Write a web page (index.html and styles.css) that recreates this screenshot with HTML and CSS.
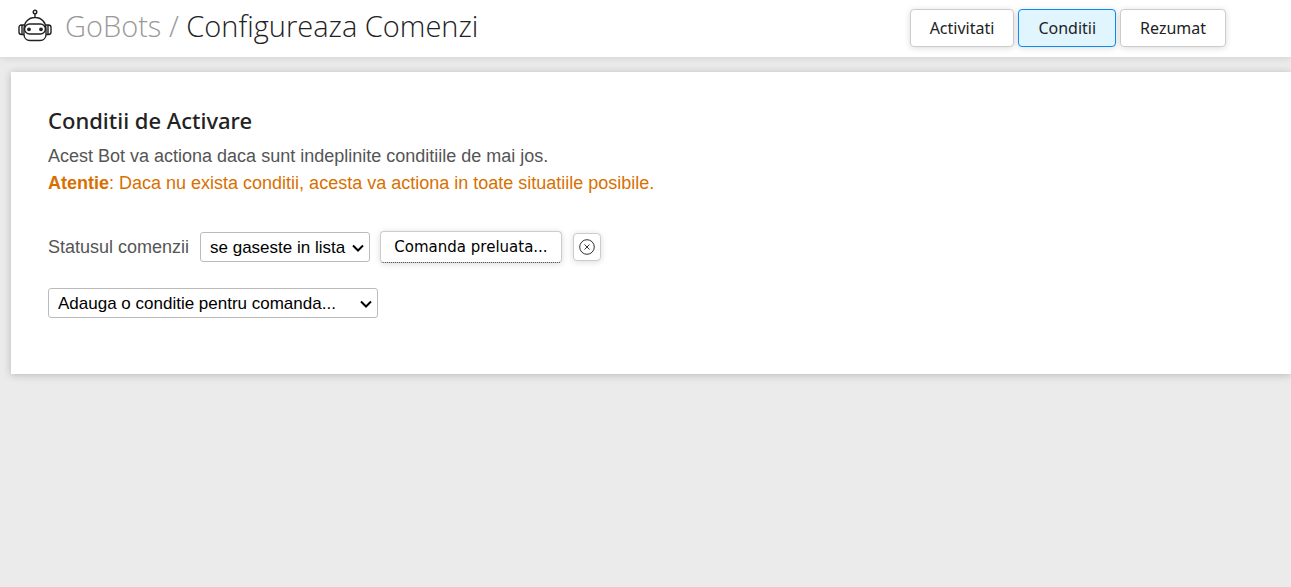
FILE: index.html
```html
<!DOCTYPE html>
<html lang="ro">
<head>
    <meta charset="UTF-8">
    <meta name="viewport" content="width=device-width, initial-scale=1.0">
    <title>GoBots / Configureaza Comenzi</title>
    <link rel="stylesheet" href="styles.css">
</head>
<body>
    <header class="topbar">
        <svg class="logo" viewBox="0 0 34 34" fill="none" stroke="#222" stroke-width="1.4">
            <circle cx="17" cy="3" r="1.8"/>
            <path d="M17 4.8V8M6 25.5V20C6 13.300 10.500 8.500 17 8.500S28 13.300 28 20V25.500C28 29 25.500 31.500 22 31.500H12C8.500 31.500 6 29 6 25.500Z"/>
            <path d="M6 16H3.500Q1 16 1 18.500V23Q1 25.500 3.500 25.500H6M28 16H30.500Q33 16 33 18.500V23Q33 25.500 30.500 25.500H28M4 16V25.500M30 16V25.500"/>
            <rect x="6.600" y="15" width="20.800" height="10" rx="5"/>
            <circle cx="11" cy="20.300" r="1.200" fill="#222"/>
            <circle cx="23" cy="20.300" r="1.200" fill="#222"/>
        </svg>
        <h1><a href="#">GoBots</a> <span>/</span> Configureaza Comenzi</h1>
        <nav class="tabs">
            <button type="button">Activitati</button>
            <button type="button" class="active">Conditii</button>
            <button type="button">Rezumat</button>
        </nav>
    </header>

    <main class="panel">
        <h2>Conditii de Activare</h2>
        <p>Acest Bot va actiona daca sunt indeplinite conditiile de mai jos.</p>
        <p class="warning"><strong>Atentie</strong>: Daca nu exista conditii, acesta va actiona in toate situatiile posibile.</p>

        <div class="condition">
            <label for="operator">Statusul comenzii</label>
            <div class="select">
                <select id="operator">
                    <option>se gaseste in lista</option>
                    <option>nu se gaseste in lista</option>
                </select>
                <svg viewBox="0 0 12 8"><path d="M1 1.500L6 6.500L11 1.500"/></svg>
            </div>
            <button type="button" class="values">Comanda preluata...</button>
            <button type="button" class="remove" aria-label="Sterge conditia">
                <svg viewBox="0 0 16 16"><circle cx="8" cy="8" r="7.300"/><path d="M5.500 5.500L10.500 10.500M10.500 5.500L5.500 10.500"/></svg>
            </button>
        </div>

        <div class="select select-wide">
            <select aria-label="Adauga o conditie">
                <option>Adauga o conditie pentru comanda...</option>
            </select>
            <svg viewBox="0 0 12 8"><path d="M1 1.500L6 6.500L11 1.500"/></svg>
        </div>
    </main>
</body>
</html>
```
FILE: styles.css
```css
* { box-sizing: border-box; }
body { margin: 0; min-height: 100vh; background: #ebebeb; color: #555; font-family: "Liberation Sans", Arial, sans-serif; font-size: 18px; line-height: 27px; }

.topbar { display: flex; align-items: center; height: 57px; padding: 0 65px 2px 18px; background: white; box-shadow: 0 0 8px rgba(0,0,0,0.15); }
.logo { width: 34px; height: 34px; margin: 0 13px 4px 0; }
h1 { margin: 0 0 3px; color: #222; font-family: "Open Sans", sans-serif; font-size: 29px; font-weight: 300; line-height: 40px; }
h1 a, h1 span { color: #999; text-decoration: none; }
.tabs { display: flex; gap: 4px; margin-left: auto; }
button { border: 1px solid #ccc; border-radius: 4px; background: white; box-shadow: 0 1px 6px rgba(0,0,0,0.15); cursor: pointer; }
.tabs button { height: 38px; padding: 0 19px; color: #222; font-family: "Noto Sans", sans-serif; font-size: 16px; }
.tabs .active { border-color: #0d8bf2; background: #e1f5fe; }

.panel { margin: 15px 0 0 11px; padding: 34px 37px 56px; background: white; box-shadow: 0 1px 8px rgba(0,0,0,0.22); }
h2 { margin: 0 0 9px; color: #222; font-family: "Noto Sans", sans-serif; font-size: 22px; font-weight: 500; line-height: 28px; }
p { margin: 0; }
.warning { color: #d87000; }

.condition { display: flex; align-items: center; height: 30px; margin: 35px 0 26px; }
.condition label { flex: 0 0 152px; white-space: nowrap; }
.select { position: relative; width: 170px; height: 30px; }
.select-wide { width: 330px; }
select { display: block; width: 100%; height: 100%; padding: 0 9px; appearance: none; border: 1px solid #bbb; border-radius: 3px; background: white; color: black; font-family: "Liberation Sans", Arial, sans-serif; font-size: 17px; }
.select svg { position: absolute; top: 12px; right: 6px; width: 12px; height: 8px; fill: none; stroke: black; stroke-width: 2; pointer-events: none; }
.values { min-width: 182px; height: 32px; margin: 0 11px 0 10px; padding: 0 12px; border-bottom: 1px dotted #222; color: black; font-family: "DejaVu Sans", Verdana, sans-serif; font-size: 15px; }
.remove { display: flex; align-items: center; justify-content: center; width: 28px; height: 28px; padding: 0; }
.remove svg { width: 16px; height: 16px; fill: none; stroke: #333; stroke-width: 1; }
```
